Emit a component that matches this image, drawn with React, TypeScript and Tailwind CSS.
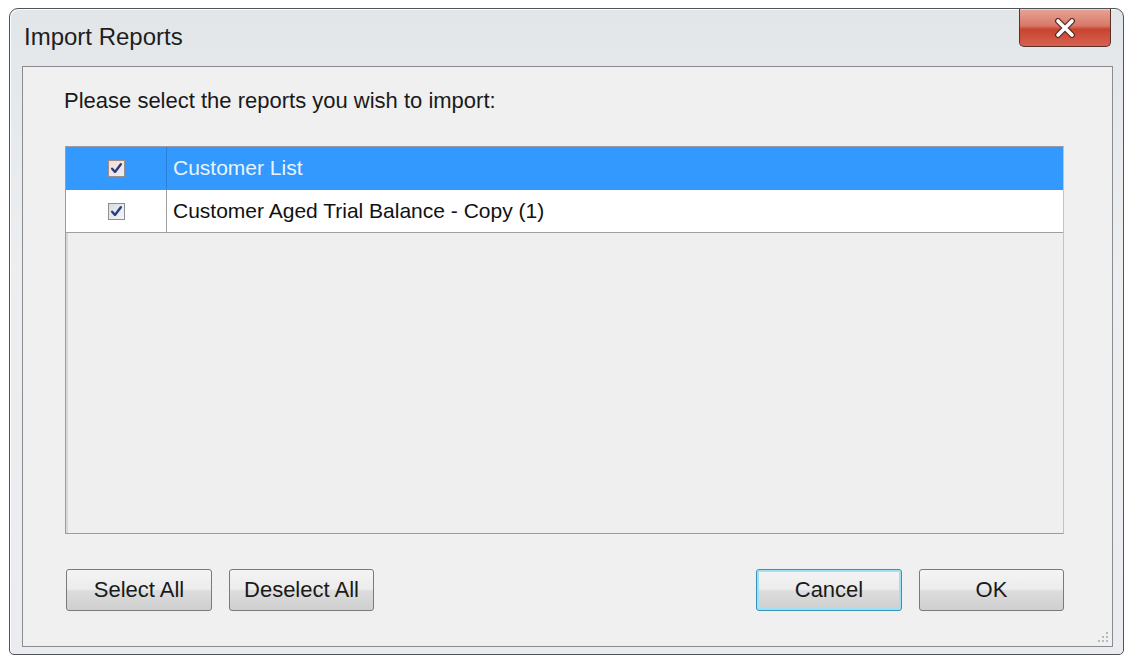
import { useState } from "react";

type Report = { id: number; name: string; checked: boolean };

const initialReports: Report[] = [
  { id: 1, name: "Customer List", checked: true },
  { id: 2, name: "Customer Aged Trial Balance - Copy (1)", checked: true },
];

function CheckBox({ checked, selected }: { checked: boolean; selected: boolean }) {
  return <span className={`flex h-[17px] w-[17px] items-center justify-center border ${selected ? "border-[#9a8f8c] bg-gradient-to-br from-[#f4ded6] to-[#e9eef8]" : "border-[#8e8f8f] bg-gradient-to-br from-[#d9dde4] to-[#f4f6f9]"}`}>
    {checked && <svg viewBox="0 0 12 12" className="h-[13px] w-[13px]">
      <path d="M2 6.2 L4.6 9.2 L10 2" fill="none" stroke="#2b3d7a" strokeWidth="2.2" strokeLinecap="round" strokeLinejoin="round"/>
    </svg>}
  </span>;
}

function WinButton({ label, width, focused }: { label: string; width: string; focused?: boolean }) {
  return <button className={`${width} relative h-[42px] rounded-[3px] border ${focused ? "border-[#3c8fb5] shadow-[inset_0_0_0_2px_#9fe0f2]" : "border-[#7a7a7a]"} bg-[linear-gradient(to_bottom,#f4f4f4_0%,#ececec_48%,#dddddd_52%,#cfcfcf_100%)] text-[22px] leading-none text-[#1a1a1a]`}>
    {label}
  </button>;
}

export default function App() {
  const [reports] = useState(initialReports);
  const [selectedId] = useState(1);

  return <div className="h-[660px] w-[1128px] overflow-hidden bg-white pl-[9px] pt-[8px] font-['Liberation_Sans',Arial,sans-serif]">
    <div className="relative flex h-[647px] w-[1115px] flex-col rounded-t-[9px] rounded-b-[5px] border border-[#505458] bg-[linear-gradient(to_bottom,#e3e6e9_0%,#eceef0_40%,#eaecef_100%)] shadow-[inset_1px_1px_0_#fbfcfd]">
      {/* title bar */}
      <div className="flex h-[57px] shrink-0 items-center pl-[14px] pb-[2px] text-[24px] text-[#1e1e1e]">Import Reports</div>
      <button className="absolute right-[12px] top-0 flex h-[38px] w-[92px] items-center justify-center rounded-b-[5px] border border-t-0 border-[#5b3029] bg-[linear-gradient(to_bottom,#e6a597_0%,#d87868_45%,#c8442f_55%,#d6624f_100%)] shadow-[inset_0_1px_0_#f3c9bf]">
        <svg viewBox="0 0 24 20" className="h-[20px] w-[24px]">
          <path d="M5 3 L19 17 M19 3 L5 17" stroke="#5a2a22" strokeWidth="6" strokeLinecap="round"/>
          <path d="M5 3 L19 17 M19 3 L5 17" stroke="#ffffff" strokeWidth="3.6" strokeLinecap="round"/>
        </svg>
      </button>

      {/* client area */}
      <div className="mb-[7px] ml-[12px] mr-[10px] flex flex-1 flex-col border border-[#8a8c8f] bg-[#f0f0f0] pl-[41px] pr-[48px] pt-[22px]">
        <p className="text-[22px] leading-[24px] text-[#1a1a1a]">Please select the reports you wish to import:</p>

        <div className="ml-[1px] mt-[33px] h-[388px] border border-[#9a9ca3] border-r-[#b9c4d6] bg-[#efefef] shadow-[inset_2px_0_0_#d7d8dc]">
          {reports.map(r => {
            const selected = r.id === selectedId;
            return <div key={r.id} className={`flex h-[43px] border-b ${selected ? "border-[#3399ff] bg-[#3399ff] text-[#e9f4ff]" : "border-[#a0a0a0] bg-white text-[#111111]"}`}>
              <div className={`flex w-[101px] shrink-0 items-center justify-center border-r ${selected ? "border-[#2a7fd6]" : "border-[#a0a0a0]"}`}>
                <CheckBox checked={r.checked} selected={selected}/>
              </div>
              <div className="flex items-center pl-[6px] text-[21px]">{r.name}</div>
            </div>;
          })}
        </div>

        <div className="ml-[2px] mt-[35px] flex items-center">
          <div className="flex gap-[17px]">
            <WinButton label="Select All" width="w-[146px]"/>
            <WinButton label="Deselect All" width="w-[145px]"/>
          </div>
          <div className="ml-auto flex gap-[17px]">
            <WinButton label="Cancel" width="w-[146px]" focused/>
            <WinButton label="OK" width="w-[145px]"/>
          </div>
        </div>
      </div>

      {/* resize grip */}
      <svg viewBox="0 0 12 12" className="absolute bottom-[11px] right-[14px] h-[12px] w-[12px]">
        {[[9, 1], [5, 5], [9, 5], [1, 9], [5, 9], [9, 9]].map(([x, y]) => <rect key={`${x}-${y}`} x={x} y={y} width="2" height="2" fill="#b5b8bc"/>)}
      </svg>
    </div>
  </div>;
}
